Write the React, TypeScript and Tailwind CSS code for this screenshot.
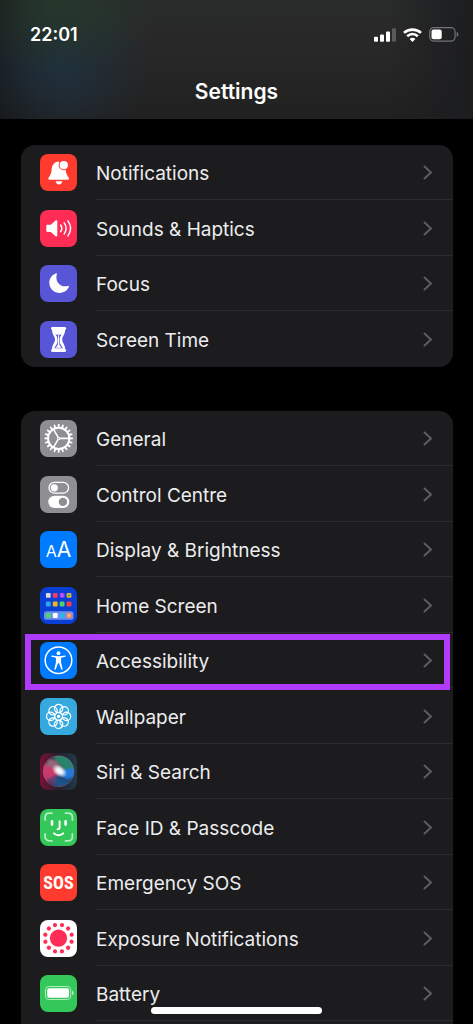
import type { ReactNode } from 'react';

type Row = { label: string; tile: string; icon: ReactNode; highlighted?: boolean };

function Glyph({ children }: { children: ReactNode }) {
  return (
    <svg viewBox="0 0 37 37" className="size-full" fill="none" aria-hidden="true">
      {children}
    </svg>
  );
}

const around = (count: number, offset = 0) =>
  Array.from({ length: count }, (_, i) => offset + (i * 360) / count);

const BellIcon = (
  <Glyph>
    <path
      fill="#fff"
      d="M18.6 7.4c-4.5.4-6.9 3.9-7 8.6-.2 5.1-3.3 7.3-3.3 8.6 0 .7.5 1.1 1.3 1.1h18.2c.8 0 1.3-.4 1.3-1.1 0-1.3-3-3.4-3.3-8.4l-7.2-8.8z"
    />
    <path fill="#fff" d="M15.6 27.3h6.8c-.3 1.9-1.6 3.1-3.4 3.1s-3.1-1.2-3.4-3.1z" />
    <circle cx="23.8" cy="11.2" r="5.1" fill="#ff3b30" />
    <circle cx="23.8" cy="11.2" r="4.1" fill="#fff" />
  </Glyph>
);

const SpeakerIcon = (
  <Glyph>
    <path
      fill="#fff"
      d="M7.5 14.7h3.3l4.8-4.1c.7-.6 1.7-.2 1.7.8v14c0 1-1 1.4-1.7.8l-4.8-4.2H7.5c-.7 0-1.2-.5-1.2-1.2v-4.9c0-.7.5-1.2 1.2-1.2z"
    />
    <g stroke="#fff" strokeWidth="1.5" strokeLinecap="round">
      <path d="M20.6 15c1.5 2.1 1.5 4.7 0 6.8" />
      <path d="M24.2 12.9c2.5 3.5 2.5 7.5 0 11" />
      <path d="M27.9 10.9c3.5 4.7 3.5 10.3 0 15" />
    </g>
  </Glyph>
);

const MoonIcon = (
  <Glyph>
    <path
      fill="#fff"
      d="M16.2 8.2c.5-.2.9.2.7.7-2.2 6.9 2.4 12.5 8.7 12.4 1 0 1.9-.2 2.6-.4.6-.2 1 .2.8.7-1.3 3.8-5 6.3-9.200 6.3-5.9 0-10.5-4.3-10.5-10.2 0-4.3 2.7-8.1 6.9-9.5z"
    />
  </Glyph>
);

const HourglassIcon = (
  <Glyph>
    <path
      fill="#fff"
      d="M12.6 6h12c1 0 1.6.6 1.6 1.4s-.6 1.4-1 1.4c0 4.8-3 6.3-3 9.7s3 4.9 3 9.7c.4 0 1 .6 1 1.4S25.6 31 24.6 31h-12c-1 0-1.6-.6-1.6-1.4s.6-1.4 1-1.4c0-4.8 3-6.3 3-9.7s-3-4.9-3-9.7c-.4 0-1-.6-1-1.4S11.6 6 12.6 6z"
    />
    <path
      fill="#5856d6"
      d="M15.4 13.2c1.2 1.6 2 2.8 2.1 5.3 0 3.3-.5 4.6-1.7 6.2l-1.5 2.5h8.6l-1.5-2.5c-1.2-1.6-1.7-2.9-1.7-6.2.1-2.500.9-3.7 2.1-5.3-1.5.7-4.900.7-6.400 0z"
    />
    <path fill="#fff" d="M18.1 14.3h1l.3 9.6 2.3 2.9h-6.2l2.3-2.9z" />
  </Glyph>
);

const GearIcon = (
  <Glyph>
    <circle cx="18.7" cy="18.4" r="10.6" stroke="#fff" strokeWidth="2" />
    {around(20).map((a) => (
      <path key={a} d="M17.9 4.6l.3-.6h1l.3.6.3 3.2h-2.2z" fill="#fff" transform={`rotate(${a} 18.7 18.4)`} />
    ))}
    {around(3, 90).map((a) => (
      <path key={a} d="M18.7 17V8" stroke="#fff" strokeWidth="1.6" transform={`rotate(${a} 18.7 18.4)`} />
    ))}
    <circle cx="18.7" cy="18.4" r="1.7" fill="#fff" />
    <circle cx="18.7" cy="18.4" r=".6" fill="#8e8e93" />
  </Glyph>
);

const TogglesIcon = (
  <Glyph>
    <rect x="9" y="6.4" width="19.6" height="10.8" rx="5.4" stroke="#fff" strokeWidth="1.3" />
    <circle cx="14.3" cy="11.8" r="3.6" fill="#fff" />
    <rect x="8.3" y="19.7" width="21" height="12.4" rx="6.2" fill="#fff" />
    <circle cx="22.9" cy="25.9" r="4.2" fill="#8e8e93" />
  </Glyph>
);

const LetterSizeIcon = (
  <span className="flex items-baseline leading-none text-white" aria-hidden="true">
    <span className="text-base leading-none">A</span>
    <span className="text-[21px] leading-none">A</span>
  </span>
);

const homeApps = [
  ['#d9d9de', '#f43e5e', '#a33ff0', '#f0b429'],
  ['#2ea6ea', '#efb41f', '#4fd16c', '#ff4036'],
];

const HomeScreenIcon = (
  <Glyph>
    {homeApps.map((line, r) =>
      line.map((color, c) => (
        <rect key={color} x={5.9 + c * 6.9} y={5.9 + r * 8.7} width="4.8" height="4.8" rx="1" fill={color} />
      )),
    )}
    <path d="M28 9.2l2-2" stroke="#35b85a" strokeWidth="1.6" />
    <path d="M22.1 6.5v3.5" stroke="#d58cff" strokeWidth="1" />
    <rect x="4" y="24.2" width="29.5" height="8.6" rx="2.6" fill="#6f8df0" />
    <circle cx="8.4" cy="28.5" r="2.7" fill="#4fd16c" />
    <rect x="12.8" y="26.1" width="4.9" height="4.9" rx="1.2" fill="#fff" />
    <circle cx="22.1" cy="28.5" r="2.6" fill="#2bb5ea" />
    <rect x="26.6" y="26.1" width="5" height="5" rx="1.4" fill="#ff8b52" />
    <circle cx="29.1" cy="28.6" r="1" fill="#ffd3a0" />
  </Glyph>
);

const AccessibilityIcon = (
  <Glyph>
    <circle cx="18.5" cy="18.2" r="13.3" stroke="#fff" strokeWidth="1.5" />
    <circle cx="18.5" cy="11.2" r="1.9" fill="#fff" />
    <path
      fill="#fff"
      d="M12.2 13.5c2.3.5 4.1.7 6.3.7s4-.2 6.3-.7c1-.2 1.3 1.1.4 1.3l-4.1 1v4.7l1.5 6.3c.3 1.1-1 1.4-1.4.4l-2.2-6h-1l-2.2 6c-.4 1-1.7.7-1.4-.4l1.5-6.3v-4.7l-4.1-1c-.9-.2-.6-1.5.4-1.3z"
    />
  </Glyph>
);

const WallpaperIcon = (
  <Glyph>
    {around(8).map((a) => (
      <circle key={a} cx="18.6" cy="10.5" r="4.2" stroke="#fff" strokeWidth="1.2" transform={`rotate(${a} 18.6 18.4)`} />
    ))}
    <circle cx="18.6" cy="18.4" r="4" stroke="#fff" strokeWidth=".8" />
    <circle cx="18.6" cy="18.4" r="1.6" fill="#fff" />
  </Glyph>
);

const SiriIcon = (
  <Glyph>
    <defs>
      <linearGradient id="siri-tile" x1="0" y1="0" x2="1" y2="0">
        <stop offset="0" stopColor="#7a1236" />
        <stop offset=".5" stopColor="#241f2c" />
        <stop offset="1" stopColor="#203a48" />
      </linearGradient>
      <radialGradient id="siri-glow">
        <stop offset="0" stopColor="#fff" />
        <stop offset=".4" stopColor="#fff" stopOpacity=".85" />
        <stop offset="1" stopColor="#fff" stopOpacity="0" />
      </radialGradient>
      <clipPath id="siri-orb">
        <circle cx="18.6" cy="18.2" r="15.5" />
      </clipPath>
      <filter id="siri-soft" x="-10%" y="-10%" width="120%" height="120%">
        <feGaussianBlur stdDeviation=".9" />
      </filter>
    </defs>
    <rect width="37" height="37" fill="url(#siri-tile)" />
    <g clipPath="url(#siri-orb)">
      <g filter="url(#siri-soft)">
        <path fill="#262b4a" d="M0 0h37v37H0z" />
        <path fill="#28846a" d="M12 0h25v18c-6 3-12 0-16-5-3-4-7-7-9-13z" />
        <path fill="#c83a6a" d="M1 12c6-3 13 1 18 6-3 8-12 13-17 9z" />
        <path fill="#6b3a6c" d="M6 25c5 1 8-2 13-6l-2 13c-5 0-9-3-11-7z" />
        <path fill="#2078dc" d="M18 18c6-1 11-3 17-2 1 6-2 10-7 10-4 0-7-3-10-8z" />
        <path fill="#1b5288" d="M16 23c4 1 8 5 15 4-4 7-13 9-17 5z" />
        <path fill="#93687a" d="M8 7c6-3 12 3 13 10l-5 1c-2-3-5-5-10-5z" />
      </g>
    </g>
    <ellipse cx="19.5" cy="18" rx="8.5" ry="5.8" fill="url(#siri-glow)" transform="rotate(35 19.5 18)" />
    <circle cx="18.6" cy="18.2" r="15.5" stroke="#b06e90" strokeOpacity=".5" strokeWidth=".8" />
  </Glyph>
);

const FaceIcon = (
  <Glyph>
    <path
      d="M5.1 11V8.6c0-2.7 1.6-4.4 4.4-4.4H12M25.5 4.2H28c2.8 0 4.4 1.7 4.4 4.4V11M32.4 25v2.5c0 2.7-1.6 4.4-4.4 4.4h-2.5M12 31.9H9.5c-2.8 0-4.4-1.7-4.4-4.4V25"
      stroke="#b5eac2"
      strokeWidth="1.8"
      strokeLinecap="round"
    />
    <g stroke="#fff" strokeWidth="2" strokeLinecap="round">
      <path d="M12 12.4v3.2M25.6 12.4v3.2" strokeWidth="2.6" />
      <path d="M19.6 12.3v6.2c0 1.2-.7 1.7-2 1.7" strokeWidth="1.9" />
      <path d="M14 24.4c2.6 2.5 6.6 2.5 9.2 0" />
    </g>
  </Glyph>
);

const SosIcon = (
  <span
    className="font-['Liberation_Sans_Narrow','Roboto_Condensed',Roboto,sans-serif] text-lg font-bold leading-none text-white"
    aria-hidden="true"
  >
    SOS
  </span>
);

const ExposureIcon = (
  <Glyph>
    <circle cx="18.5" cy="18.2" r="8.6" fill="#ff2d55" />
    {around(12, 15).map((a) => (
      <circle key={a} cx="18.5" cy="4.6" r="2.1" fill="#ff2d55" transform={`rotate(${a} 18.5 18.2)`} />
    ))}
  </Glyph>
);

const BatteryIcon = (
  <Glyph>
    <rect x="5.5" y="11.5" width="25.2" height="13" rx="3.2" stroke="#b5eac2" strokeWidth="1" />
    <rect x="7.2" y="13.2" width="21.8" height="9.6" rx="1.7" fill="#fff" />
    <path fill="#b5eac2" d="M32 15.7c1.1.3 1.7 1.2 1.7 2.3s-.6 2-1.7 2.3z" />
  </Glyph>
);

const alerts: Row[] = [
  { label: 'Notifications', tile: 'bg-[#ff3b30]', icon: BellIcon },
  { label: 'Sounds & Haptics', tile: 'bg-[#ff2d55]', icon: SpeakerIcon },
  { label: 'Focus', tile: 'bg-[#5856d6]', icon: MoonIcon },
  { label: 'Screen Time', tile: 'bg-[#5856d6]', icon: HourglassIcon },
];

const device: Row[] = [
  { label: 'General', tile: 'bg-[#8e8e93]', icon: GearIcon },
  { label: 'Control Centre', tile: 'bg-[#8e8e93]', icon: TogglesIcon },
  { label: 'Display & Brightness', tile: 'bg-[#007aff]', icon: LetterSizeIcon },
  { label: 'Home Screen', tile: 'bg-[#0a3fd6]', icon: HomeScreenIcon },
  { label: 'Accessibility', tile: 'bg-[#007aff]', icon: AccessibilityIcon, highlighted: true },
  { label: 'Wallpaper', tile: 'bg-[#36aadf]', icon: WallpaperIcon },
  { label: 'Siri & Search', tile: 'bg-[#241f2c]', icon: SiriIcon },
  { label: 'Face ID & Passcode', tile: 'bg-[#34c759]', icon: FaceIcon },
  { label: 'Emergency SOS', tile: 'bg-[#ff3b30]', icon: SosIcon },
  { label: 'Exposure Notifications', tile: 'bg-white', icon: ExposureIcon },
  { label: 'Battery', tile: 'bg-[#34c759]', icon: BatteryIcon },
];

function SettingsRow({ row, divided }: { row: Row; divided: boolean }) {
  return (
    <li className="relative odd:h-[55px] even:h-14">
      <a href="#" className="flex h-full items-center gap-[19px] pl-[19px]">
        <span className={`flex size-[37px] shrink-0 items-center justify-center overflow-hidden rounded-lg ${row.tile}`}>
          {row.icon}
        </span>
        <span
          className={`flex h-full flex-1 items-center justify-between border-b pt-[2px] pr-5 ${divided ? 'border-[#2b2b2d]' : 'border-transparent'}`}
        >
          <span className="pt-[2px] text-[19px] leading-7">{row.label}</span>
          <svg viewBox="0 0 10 16" className="h-4 w-[10px]" fill="none" aria-hidden="true">
            <path d="M1.5 1.5L8 7.5L1.5 13.5" stroke="#5d5d61" strokeWidth="2" strokeLinecap="round" strokeLinejoin="round" />
          </svg>
        </span>
      </a>
      {row.highlighted && (
        <span className="pointer-events-none absolute top-px right-[3px] -bottom-[2px] left-1 z-10 border-[6px] border-[#b03bfa]" />
      )}
    </li>
  );
}

function StatusIcons() {
  return (
    <div className="flex items-center gap-[7px]">
      <svg viewBox="0 0 22 14" className="h-[14px] w-[22px]" aria-hidden="true">
        <rect x="0" y="8.8" width="4" height="5" rx="1" fill="#fff" />
        <rect x="6" y="6.4" width="4" height="7.4" rx="1" fill="#fff" />
        <rect x="12" y="3.5" width="4" height="10.3" rx="1" fill="#fff" />
        <rect x="18" y=".3" width="4" height="13.5" rx="1" fill="#5a5a5c" />
      </svg>
      <svg viewBox="0 0 19 14" className="h-[14px] w-[19px]" fill="none" aria-hidden="true">
        <path d="M1 4.9C5.6.4 13.4.4 18 4.9" stroke="#fff" strokeWidth="2.7" />
        <path d="M4.2 8.2c3-2.9 7.6-2.9 10.6 0" stroke="#fff" strokeWidth="2.6" />
        <path d="M9.5 14l-2.9-3c1.6-1.6 4.2-1.6 5.8 0z" fill="#fff" />
      </svg>
      <svg viewBox="0 0 30 15" className="h-[15px] w-[30px]" fill="none" aria-hidden="true">
        <rect x=".7" y=".7" width="25.4" height="13.4" rx="4" stroke="#727274" strokeWidth="1.2" />
        <rect x="2.5" y="2.6" width="10.2" height="9.6" rx="2" fill="#fff" />
        <path d="M27.7 5c1.2.4 1.7 1.3 1.7 2.4s-.5 2-1.7 2.4z" fill="#727274" />
      </svg>
    </div>
  );
}

export default function App() {
  return (
    <div className="flex min-h-screen flex-col bg-black font-[Inter,'Liberation_Sans',sans-serif] text-[#ececee]">
      <header className="h-[119px] bg-[radial-gradient(ellipse_100px_70px_at_60px_5px,#25382c,transparent),radial-gradient(ellipse_90px_75px_at_62px_68px,#1f303d,transparent),linear-gradient(to_right,#17191a,transparent_14%,transparent_82%,#1c1d1f),linear-gradient(#2a2b2b,#272727_50%,#202020)] text-white">
        <div className="flex items-center justify-between pt-5 pr-[14px] pl-[30px]">
          <time className="pt-px text-lg leading-7 font-semibold">22:01</time>
          <StatusIcons />
        </div>
        <h1 className="pt-7 text-center text-[21px] leading-[30px] font-semibold">Settings</h1>
      </header>

      <main className="flex flex-1 flex-col gap-11 pt-[26px] pr-5 pl-[21px]">
        <ul className="rounded-[14px] bg-[#1c1c1e]">
          {alerts.map((row, i) => (
            <SettingsRow key={row.label} row={row} divided={i < alerts.length - 1} />
          ))}
        </ul>
        <ul className="flex-1 rounded-t-[14px] bg-[#1c1c1e]">
          {device.map((row) => (
            <SettingsRow key={row.label} row={row} divided />
          ))}
        </ul>
      </main>

      <div className="pointer-events-none fixed inset-x-0 bottom-[10px] z-20 flex justify-center">
        <span className="h-[7px] w-[36%] rounded-full bg-white" />
      </div>
    </div>
  );
}
